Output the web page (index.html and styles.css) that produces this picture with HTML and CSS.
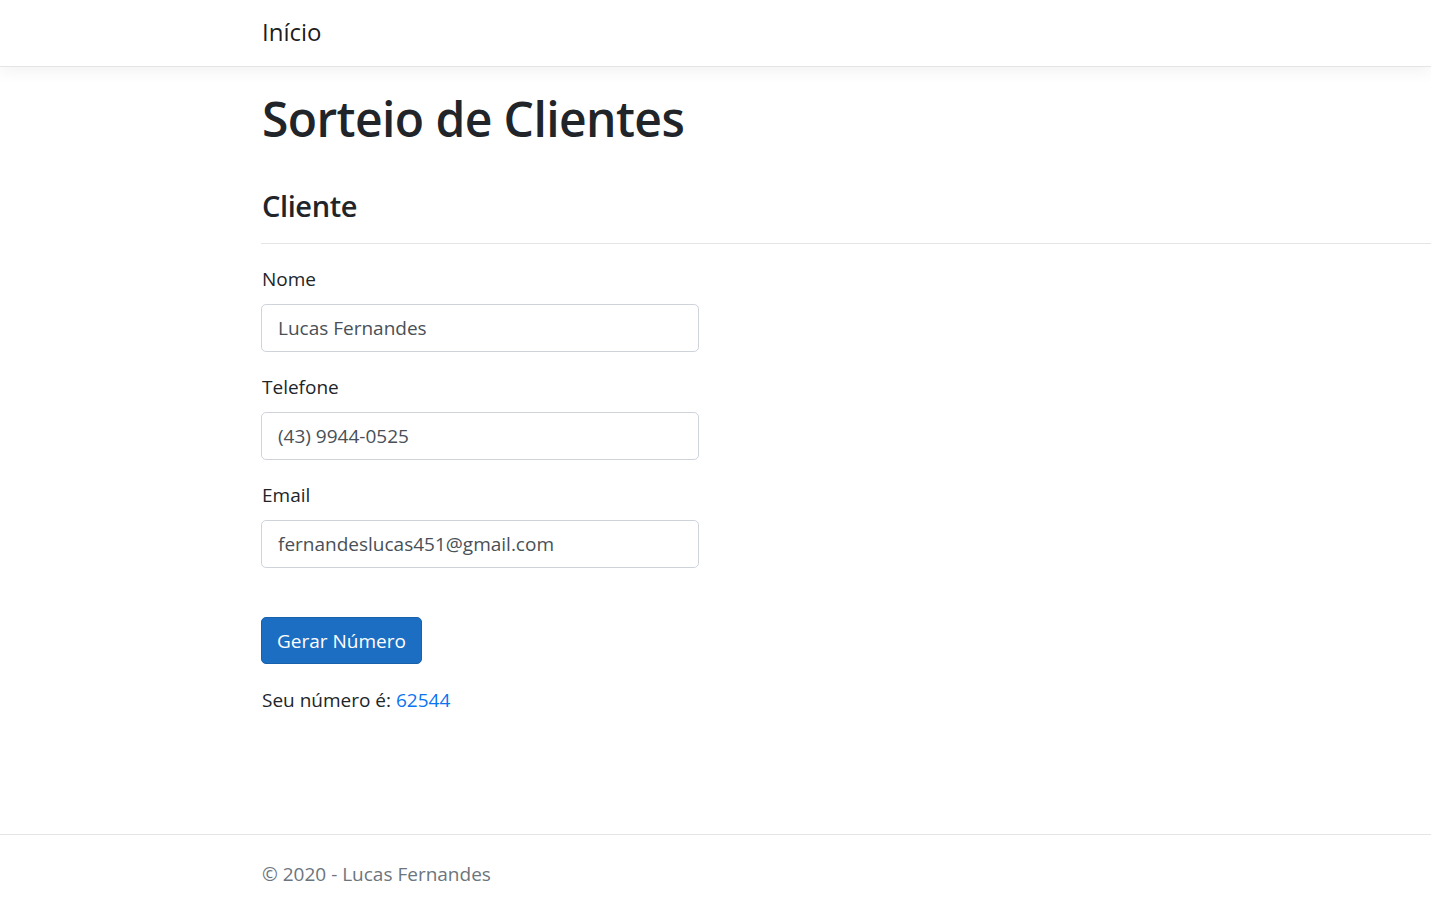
FILE: index.html
```html
<!DOCTYPE html>
<html lang="pt-br">
<head>
<meta charset="utf-8">
<title>Sorteio de Clientes</title>
<link rel="stylesheet" href="styles.css">
</head>
<body>
<header class="navbar">
  <div class="wrap">
    <a class="brand" href="#">Início</a>
  </div>
</header>
<main class="main">
  <h1 class="title">Sorteio de Clientes</h1>
  <h4 class="subtitle">Cliente</h4>
  <hr class="rule">
  <form class="form">
    <div class="group">
      <label class="label">Nome</label>
      <input class="input" type="text" value="Lucas Fernandes">
    </div>
    <div class="group">
      <label class="label">Telefone</label>
      <input class="input" type="text" value="(43) 9944-0525">
    </div>
    <div class="group">
      <label class="label">Email</label>
      <input class="input" type="text" value="fernandeslucas451@gmail.com">
    </div>
    <div class="actions">
      <button class="btn" type="button">Gerar Número</button>
    </div>
    <p class="result">Seu número é: <span class="num">62544</span></p>
  </form>
</main>
<footer class="footer">
  <div class="wrap">© 2020 - Lucas Fernandes</div>
</footer>
</body>
</html>
```
FILE: styles.css
```css
* { box-sizing: border-box; }
html, body { margin: 0; padding: 0; }
body {
  font-family: "Open Sans", "Noto Sans", sans-serif;
  font-size: 19px;
  line-height: 30px;
  color: #212529;
  background: #fff;
  height: 907px;
  display: flex;
  flex-direction: column;
  overflow: hidden;
}
.navbar {
  height: 67px;
  border-bottom: 1px solid #e5e5e5;
  box-shadow: 0 5px 15px rgba(0,0,0,.05);
  display: flex;
  align-items: center;
  background: #fff;
  position: relative;
}
.wrap { padding-left: 262px; }
.brand {
  font-size: 24px;
  line-height: 36px;
  color: rgba(0,0,0,.9);
  text-decoration: none;
  display: block;
  margin-top: -2px;
}
.main {
  padding-left: 261px;
  flex: 1;
}
.title {
  margin: 22px 0 0 1px;
  font-size: 48px;
  line-height: 60px;
  font-weight: 600;
  letter-spacing: -0.6px;
}
.subtitle {
  margin: 39px 0 0 1px;
  font-size: 29px;
  line-height: 36px;
  font-weight: 600;
  letter-spacing: -0.4px;
}
.rule {
  margin: 19px 0 0 0;
  border: 0;
  border-top: 1px solid #e5e5e5;
}
.form { padding-top: 20px; }
.group { margin-bottom: 20px; }
.label {
  display: block;
  margin: 0 0 10px 1px;
  line-height: 30px;
}
.input {
  display: block;
  width: 438px;
  height: 48px;
  padding: 0 16px;
  font: inherit;
  color: #495057;
  border: 1px solid #ced4da;
  border-radius: 5px;
  background: #fff;
}
.actions { padding-top: 29px; }
.btn {
  font: inherit;
  color: #fff;
  background: #1b6ec2;
  border: 1px solid #1861ac;
  border-radius: 5px;
  height: 47px;
  padding: 0 15px;
}
.result {
  margin: 21px 0 0 1px;
  line-height: 30px;
}
.num { color: #0b74f0; }
.footer {
  height: 73px;
  border-top: 1px solid #e5e5e5;
  color: #6c757d;
  padding-top: 24px;
  line-height: 30px;
}
```
